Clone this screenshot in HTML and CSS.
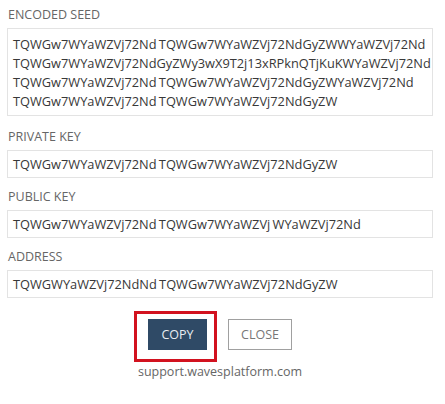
FILE: index.html
```html
<!DOCTYPE html>
<html>
<head>
<meta charset="utf-8">
<link rel="stylesheet" href="styles.css">
</head>
<body>
<div class="panel">
  <div class="field">
    <div class="label">ENCODED SEED</div>
    <div class="box seed">
      <div class="line">TQWGw7WYaWZVj72Nd TQWGw7WYaWZVj72NdGyZWWYaWZVj72Nd</div>
      <div class="line">TQWGw7WYaWZVj72NdGyZWy3wX9T2j13xRPknQTjKuKWYaWZVj72Nd</div>
      <div class="line">TQWGw7WYaWZVj72Nd TQWGw7WYaWZVj72NdGyZWYaWZVj72Nd</div>
      <div class="line">TQWGw7WYaWZVj72Nd TQWGw7WYaWZVj72NdGyZW</div>
    </div>
  </div>
  <div class="field">
    <div class="label">PRIVATE KEY</div>
    <div class="box input">TQWGw7WYaWZVj72Nd TQWGw7WYaWZVj72NdGyZW</div>
  </div>
  <div class="field">
    <div class="label">PUBLIC KEY</div>
    <div class="box input">TQWGw7WYaWZVj72Nd TQWGw7WYaWZVj WYaWZVj72Nd</div>
  </div>
  <div class="field">
    <div class="label">ADDRESS</div>
    <div class="box input">TQWGWYaWZVj72NdNd TQWGw7WYaWZVj72NdGyZW</div>
  </div>
  <div class="actions">
    <span class="highlight"><button class="btn copy">COPY</button></span>
    <button class="btn close">CLOSE</button>
  </div>
  <div class="support">support.wavesplatform.com</div>
</div>
</body>
</html>
```
FILE: styles.css
```css
html, body {
  margin: 0;
  padding: 0;
  background: #ffffff;
}
body {
  font-family: "Open Sans", "Noto Sans", sans-serif;
  color: #333;
}
.panel {
  width: 426px;
  padding: 7px 0 0 7px;
}
.field {
  display: flex;
  flex-direction: column;
}
.label {
  font-size: 12.5px;
  color: #666;
  line-height: 16px;
  padding-left: 1px;
  margin-bottom: 5px;
}
.box {
  border: 1px solid #e3e3e3;
  box-sizing: border-box;
  font-size: 12.8px;
  color: #383838;
  padding-left: 5px;
  white-space: nowrap;
  word-spacing: -1px;
}
.seed {
  height: 88px;
  padding-top: 6px;
  line-height: 19px;
  margin-bottom: 13px;
}
.input {
  height: 28px;
  line-height: 26px;
  margin-bottom: 11px;
}
.actions {
  display: flex;
  justify-content: center;
  gap: 21px;
  margin-top: 10px;
}
.highlight {
  position: relative;
  display: inline-block;
  height: 31px;
}
.highlight::after {
  content: "";
  position: absolute;
  left: -14px;
  right: -10px;
  top: -8px;
  bottom: -12px;
  border: 3px solid #d2121f;
}
.btn {
  font-family: "Open Sans", "Noto Sans", sans-serif;
  font-size: 12.5px;
  height: 31px;
  box-sizing: border-box;
  padding: 0;
  display: block;
  cursor: pointer;
}
.copy {
  width: 59px;
  background: #2f4a66;
  color: #e8edf2;
  border: none;
}
.close {
  width: 64px;
  background: #fff;
  color: #777;
  border: 1px solid #a0a0a0;
}
.support {
  text-align: center;
  font-size: 12.5px;
  line-height: 17px;
  color: #666;
  margin-top: 13px;
}
```
